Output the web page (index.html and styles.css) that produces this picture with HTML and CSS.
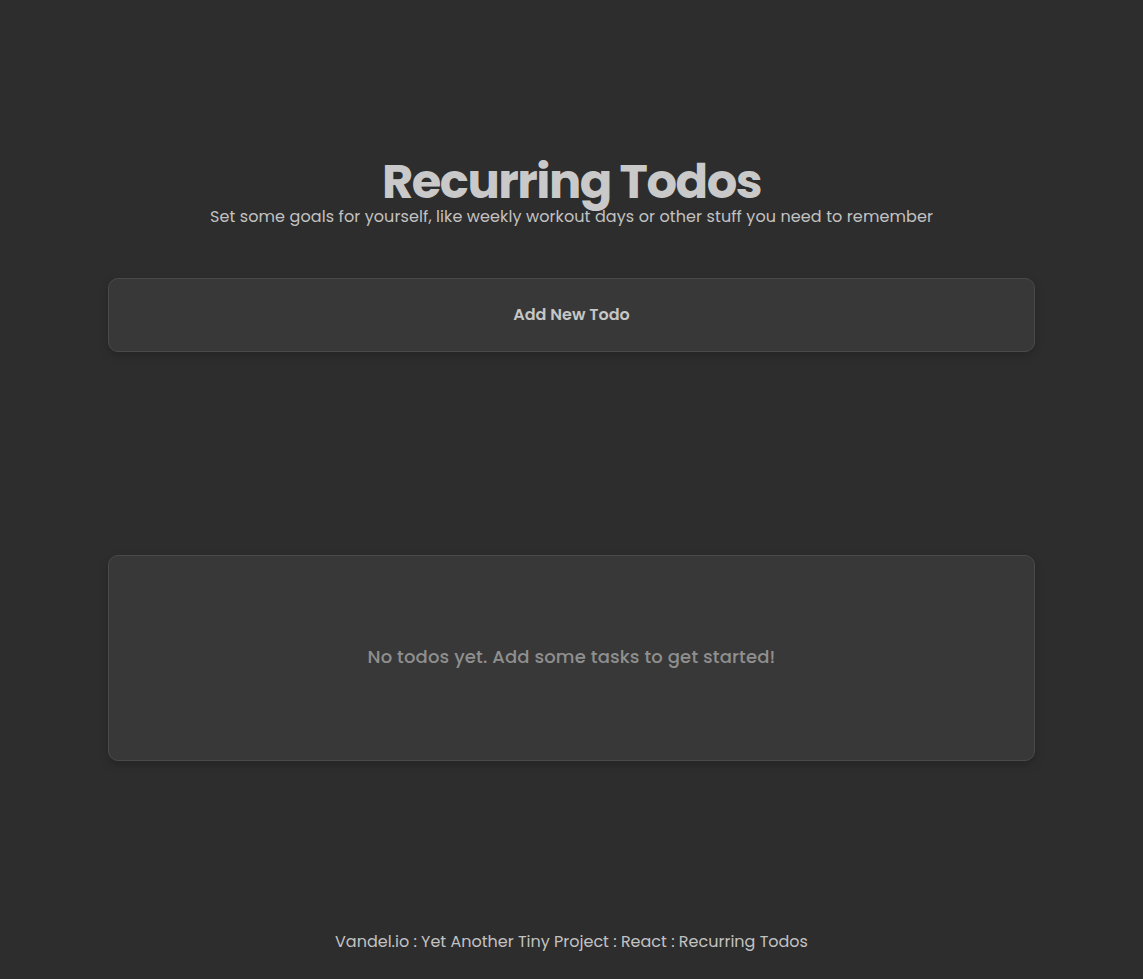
FILE: index.html
```html
<!DOCTYPE html>
<html lang="en">
<head>
<meta charset="utf-8">
<title>Recurring Todos</title>
<link rel="stylesheet" href="styles.css">
</head>
<body>
  <div class="page">
    <main class="app">
      <header class="hero">
        <h1 class="hero-title">Recurring Todos</h1>
        <p class="hero-sub">Set some goals for yourself, like weekly workout days or other stuff you need to remember</p>
      </header>

      <button class="card add-card" type="button">Add New Todo</button>

      <section class="card list-card">
        <p class="empty">No todos yet. Add some tasks to get started!</p>
      </section>
    </main>

    <footer class="footer">Vandel.io : Yet Another Tiny Project : React : Recurring Todos</footer>
  </div>
</body>
</html>
```

FILE: styles.css
```css
* { box-sizing: border-box; }

html, body {
  margin: 0;
  padding: 0;
  background: #2d2d2d;
  color: #c4c4c4;
  font-family: Poppins, "DejaVu Sans", "Open Sans", sans-serif;
}

.page {
  min-height: 979px;
  display: flex;
  flex-direction: column;
  align-items: center;
}

.app {
  width: 927px;
  display: flex;
  flex-direction: column;
  padding-top: 158px;
}

.hero {
  text-align: center;
}

.hero-title {
  margin: 0;
  font-size: 48px;
  line-height: 48px;
  font-weight: 700;
  letter-spacing: -1.5px;
  color: #c9c9c9;
}

.hero-sub {
  margin: 0;
  font-size: 16px;
  line-height: 22px;
  letter-spacing: 0.1px;
  color: #c2c2c2;
}

.card {
  background: #383838;
  border: 1px solid #4a4a4a;
  border-radius: 10px;
  box-shadow: 0 4px 10px rgba(0, 0, 0, 0.18);
}

.add-card {
  margin-top: 50px;
  height: 74px;
  width: 100%;
  padding: 0 0 2px;
  font-family: inherit;
  font-size: 16px;
  font-weight: 600;
  color: #c6c6c6;
  cursor: pointer;
}

.list-card {
  margin-top: 203px;
  height: 206px;
  padding-bottom: 4px;
  display: flex;
  align-items: center;
  justify-content: center;
}

.empty {
  margin: 0;
  font-size: 18px;
  font-weight: 500;
  letter-spacing: 0.15px;
  color: #8f8f8f;
}

.footer {
  margin-top: auto;
  padding-bottom: 25px;
  font-size: 16px;
  color: #c2c2c2;
}
```
